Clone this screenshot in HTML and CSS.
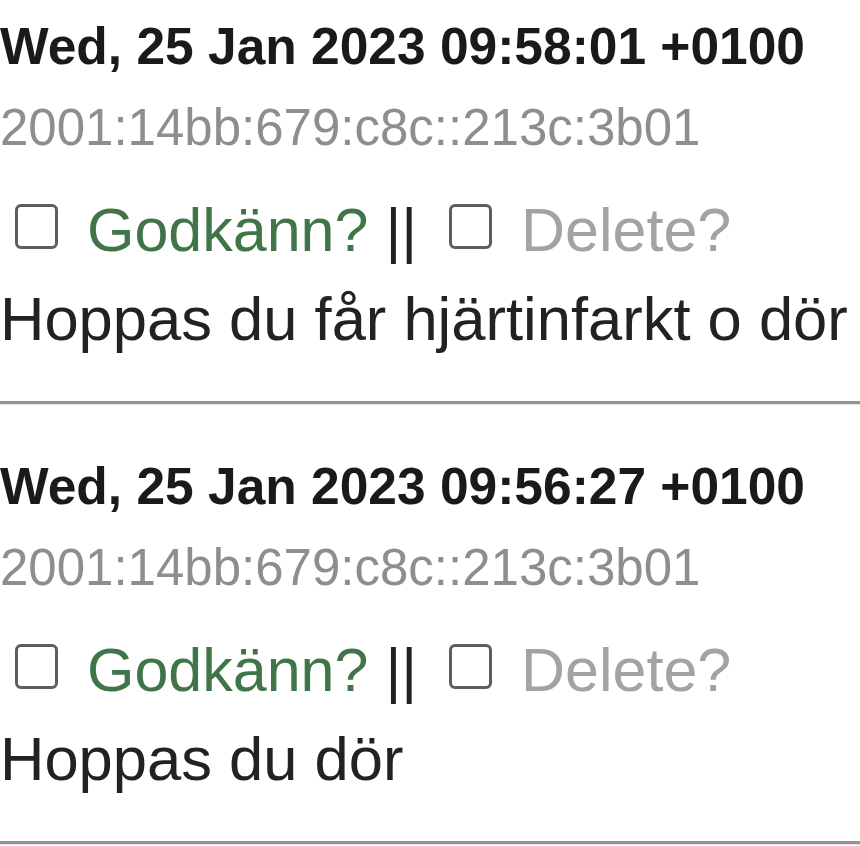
FILE: index.html
```html
<!DOCTYPE html>
<html lang="sv">
<head>
    <meta charset="UTF-8">
    <meta name="viewport" content="width=device-width, initial-scale=1.0">
    <title>Kommentarer - Moderering</title>
    <link rel="stylesheet" href="styles.css">
</head>
<body>
    <!-- Comment list -->
    <div class="comment">
        <div class="date">Wed, 25 Jan 2023 09:58:01 +0100</div>
        <div class="ip">2001:14bb:679:c8c::213c:3b01</div>
        <div class="actions"><label class="approve"><input type="checkbox" name="approve[]"> Godkänn?</label> || <label class="delete"><input type="checkbox" name="delete[]"> Delete?</label></div>
        <div class="text">Hoppas du får hjärtinfarkt o dör</div>
    </div>
    <hr>

    <div class="comment">
        <div class="date">Wed, 25 Jan 2023 09:56:27 +0100</div>
        <div class="ip">2001:14bb:679:c8c::213c:3b01</div>
        <div class="actions"><label class="approve"><input type="checkbox" name="approve[]"> Godkänn?</label> || <label class="delete"><input type="checkbox" name="delete[]"> Delete?</label></div>
        <div class="text">Hoppas du dör</div>
    </div>
    <hr>
</body>
</html>
```

FILE: styles.css
```css
* { margin: 0; padding: 0; box-sizing: border-box; font-family: "Liberation Sans", Arial, sans-serif; }
body { background: #fff; color: #222; padding-top: 5px; overflow: hidden; }

/* Comment */
.comment { margin-top: 40px; }
.comment:first-child { margin-top: 0; }
.date { font-size: 51.5px; line-height: 82px; font-weight: bold; color: #1a1a1a; white-space: nowrap; }
.ip { font-size: 51px; line-height: 82px; color: #8e8e8e; white-space: nowrap; }

/* Approve / delete row */
.actions { margin-top: 11px; font-size: 61px; line-height: 100px; color: #222; white-space: nowrap; }
.actions input { -webkit-appearance: none; appearance: none; display: inline-block; width: 43px; height: 45px; margin: 0 12px 2px 15px; border: 3px solid #5e5e5e; border-radius: 6px; background: #fff; vertical-align: baseline; }
.approve { color: #3f7548; }
.delete { color: #a3a3a3; }

.text { font-size: 61.5px; line-height: 77px; color: #222; white-space: nowrap; }

hr { margin-top: 44px; border: 0; border-top: 3px solid #939393; border-bottom: 1px solid #e4e4e4; }
```
